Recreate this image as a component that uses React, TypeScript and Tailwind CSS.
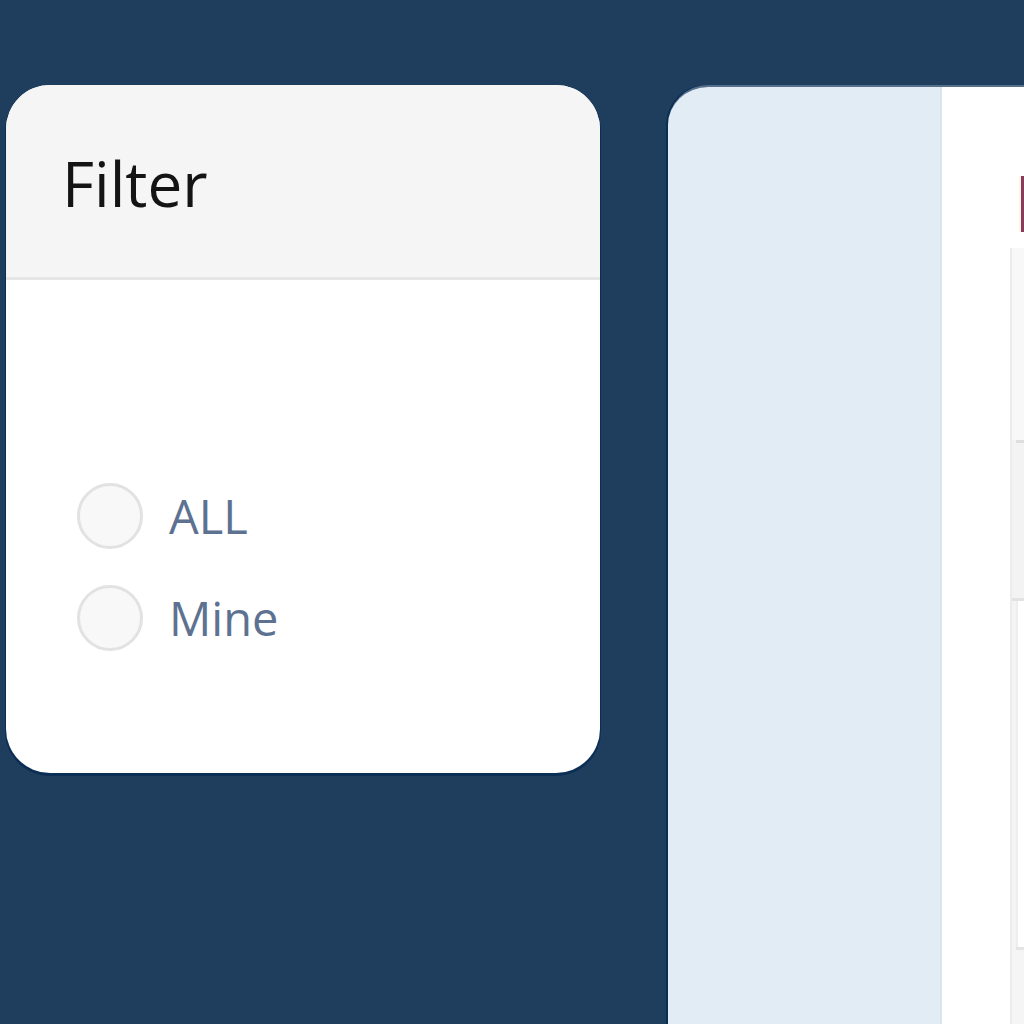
import React from "react";

export default function App() {
  const font = { fontFamily: '"Open Sans", "Noto Sans", sans-serif' };
  return (
    <div
      className="w-[1024px] h-[1024px] overflow-hidden bg-[#1f3d5c] flex items-start pt-[85px] pl-[6px] gap-[68px]"
      style={font}
    >
      {/* Filter card */}
      <div className="w-[594px] h-[688px] shrink-0 rounded-[44px] overflow-hidden bg-white flex flex-col shadow-[0_2px_0_1px_#0b2e55]">
        <div className="h-[195px] shrink-0 bg-[#f5f5f5] border-b-[3px] border-[#e6e6e6] flex items-center pl-[56px]">
          <span className="text-[62px] leading-none font-medium text-[#141414] pt-[4px]">Filter</span>
        </div>
        <div className="flex flex-col gap-[36px] pt-[203px] pl-[71px]">
          <label className="flex items-center gap-[26px]">
            <span className="w-[66px] h-[66px] rounded-full border-[3px] border-[#e2e2e2] bg-[#f8f8f8] shrink-0" />
            <span className="text-[47px] leading-none text-[#5d7290]">ALL</span>
          </label>
          <label className="flex items-center gap-[26px]">
            <span className="w-[66px] h-[66px] rounded-full border-[3px] border-[#e2e2e2] bg-[#f8f8f8] shrink-0" />
            <span className="text-[47px] leading-none text-[#5d7290]">Mine</span>
          </label>
        </div>
      </div>

      {/* Right panel */}
      <div className="flex-1 h-[950px] rounded-tl-[40px] overflow-hidden flex border-t-[2px] border-[#56708c] shadow-[-2px_0_0_#0b2e55]">
        <div className="w-[274px] shrink-0 bg-[#e2ecf5] border-r-[2px] border-[#d9e5f0]" />
        <div className="flex-1 bg-white flex flex-col pt-[89px]">
          <div className="ml-[77px] h-[56px] bg-[#8a3b5c] border-l-[2px] border-[#fdf6e0]" />
          <div className="ml-[68px] mt-[16px] flex-1 bg-[#f4f4f4] border-l-[2px] border-[#ececec] flex flex-col">
            <div className="h-[192px] bg-[#f8f8f8]" />
            <div className="h-[3px] bg-[#dedede] ml-[4px]" />
            <div className="h-[155px] bg-[#f3f3f3]" />
            <div className="h-[3px] bg-[#e2e2e2]" />
            <div className="h-[346px] bg-white ml-[4px] border-l-[2px] border-[#eeeeee]" />
            <div className="h-[3px] bg-[#e4e4e4] ml-[4px]" />
            <div className="flex-1 bg-[#f5f5f5]" />
          </div>
        </div>
      </div>
    </div>
  );
}
